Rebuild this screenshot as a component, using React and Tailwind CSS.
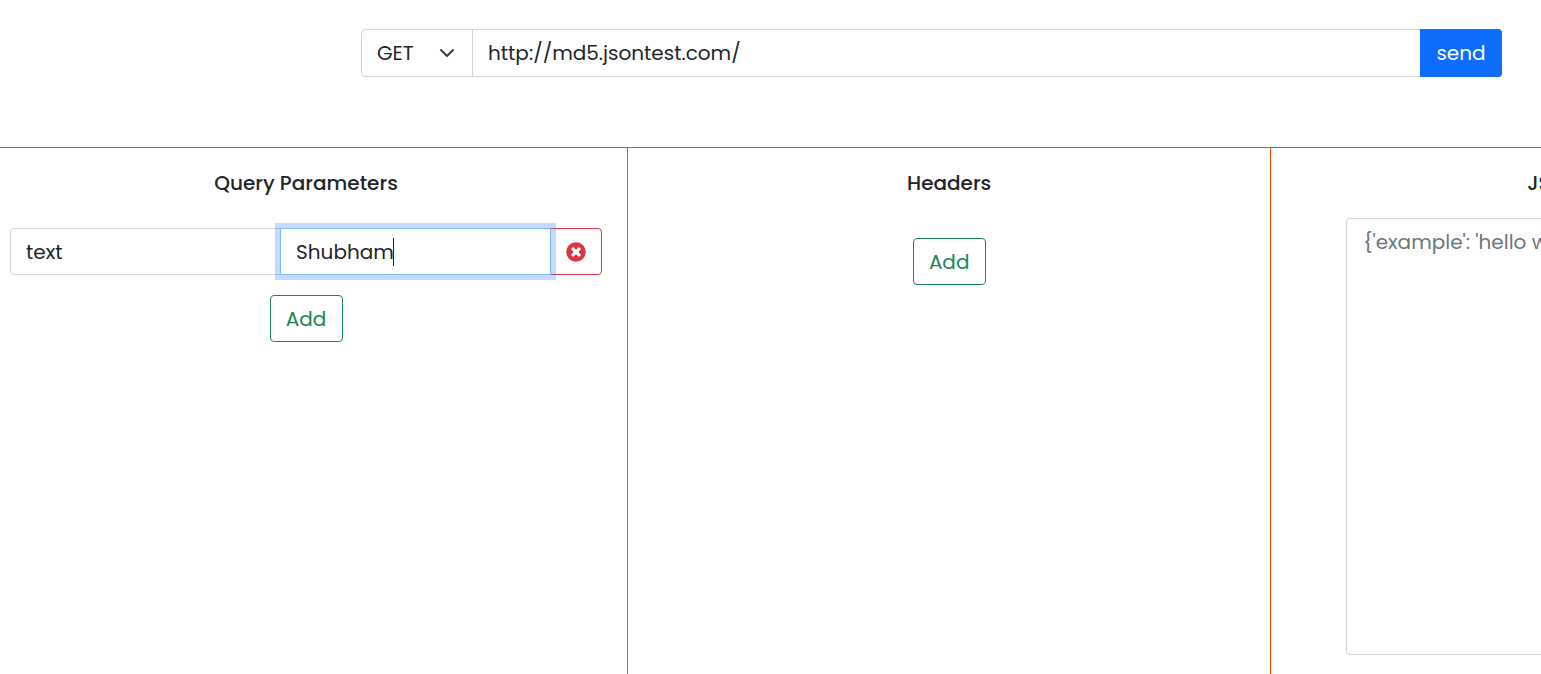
import { useState } from 'react';
import { FaTimesCircle } from 'react-icons/fa';

function AddButton({ label, onClick }) {
  return (
    <button
      type="button"
      aria-label={label}
      onClick={onClick}
      className="h-[47px] w-[73px] rounded border border-[#198754] text-[#198754]"
    >
      Add
    </button>
  );
}

function Panel({ title, children, last }) {
  return (
    <section
      className={
        last
          ? 'flex flex-col pt-5'
          : 'flex flex-col border-r border-[#ff4500] pt-5'
      }
    >
      <h2 className="text-center font-medium">{title}</h2>
      {children}
    </section>
  );
}

export default function App() {
  const [method, setMethod] = useState('GET');
  const [url, setUrl] = useState('http://md5.jsontest.com/');
  const [name, setName] = useState('text');
  const [value, setValue] = useState('Shubham');
  const [payload, setPayload] = useState('');

  return (
    <div className="flex min-h-screen flex-col overflow-hidden bg-white font-['Poppins','Inter',sans-serif] text-[20px] leading-[30px] text-[#212529]">
      <form
        className="flex pt-[29px] pr-[39px] pb-[70px] pl-[361px]"
        onSubmit={(e) => e.preventDefault()}
      >
        <div className="relative">
          <select
            aria-label="Method"
            value={method}
            onChange={(e) => setMethod(e.target.value)}
            className="h-12 w-28 appearance-none rounded-l border border-[#ced4da] bg-white pr-8 pl-[15px] outline-none"
          >
            <option>GET</option>
            <option>POST</option>
            <option>PUT</option>
            <option>PATCH</option>
            <option>DELETE</option>
          </select>
          <svg
            viewBox="0 0 16 16"
            fill="none"
            stroke="#343a40"
            strokeWidth="2"
            strokeLinecap="round"
            strokeLinejoin="round"
            className="pointer-events-none absolute top-4 right-[18px] size-4"
          >
            <path d="m2 5 6 6 6-6" />
          </svg>
        </div>
        <input
          type="url"
          aria-label="Request URL"
          value={url}
          onChange={(e) => setUrl(e.target.value)}
          className="-ml-px h-12 min-w-0 flex-1 border border-[#ced4da] px-[15px] outline-none"
        />
        <button
          type="submit"
          className="-ml-px h-12 w-[82px] rounded-r bg-[#0d6efd] text-white"
        >
          send
        </button>
      </form>

      <main className="-ml-[15px] grid w-[125.2%] flex-1 grid-cols-3 border-t border-[#ff4500]">
        <Panel title="Query Parameters">
          <div className="flex flex-col items-center gap-5 px-[25px] pt-[30px]">
            <div className="flex w-full">
              <div className="flex min-w-0 flex-1">
                <input
                  type="text"
                  aria-label="Parameter name"
                  value={name}
                  onChange={(e) => setName(e.target.value)}
                  className="h-[47px] w-full min-w-0 rounded-l border border-[#ced4da] px-[15px] outline-none"
                />
              </div>
              <div className="relative z-10 -ml-px flex min-w-0 flex-1">
                <input
                  type="text"
                  aria-label="Parameter value"
                  value={value}
                  onChange={(e) => setValue(e.target.value)}
                  className="h-[47px] w-full min-w-0 border border-[#86b7fe] px-[15px] caret-transparent ring-5 ring-[#0d6efd]/25 outline-none"
                />
                <span className="absolute top-[10px] left-[113px] h-7 w-px bg-[#212529]" />
              </div>
              <button
                type="button"
                aria-label="Remove parameter"
                className="-ml-px flex h-[47px] w-[52px] items-center justify-center rounded-r border border-[#dc3545] text-[#dc3545]"
              >
                <FaTimesCircle />
              </button>
            </div>
            <AddButton label="Add query parameter" />
          </div>
        </Panel>

        <Panel title="Headers">
          <div className="flex flex-col items-center pt-10">
            <AddButton label="Add header" />
          </div>
        </Panel>

        <Panel title="JSON Format" last>
          <div className="px-[75px] pt-5 pb-[19px]">
            <textarea
              aria-label="JSON Format"
              placeholder="{'example': 'hello world'}"
              value={payload}
              onChange={(e) => setPayload(e.target.value)}
              className="block h-[437px] w-full resize-none rounded border border-[#ced4da] px-4 py-2 outline-none placeholder:text-[#6c757d]"
            />
          </div>
        </Panel>
      </main>
    </div>
  );
}
